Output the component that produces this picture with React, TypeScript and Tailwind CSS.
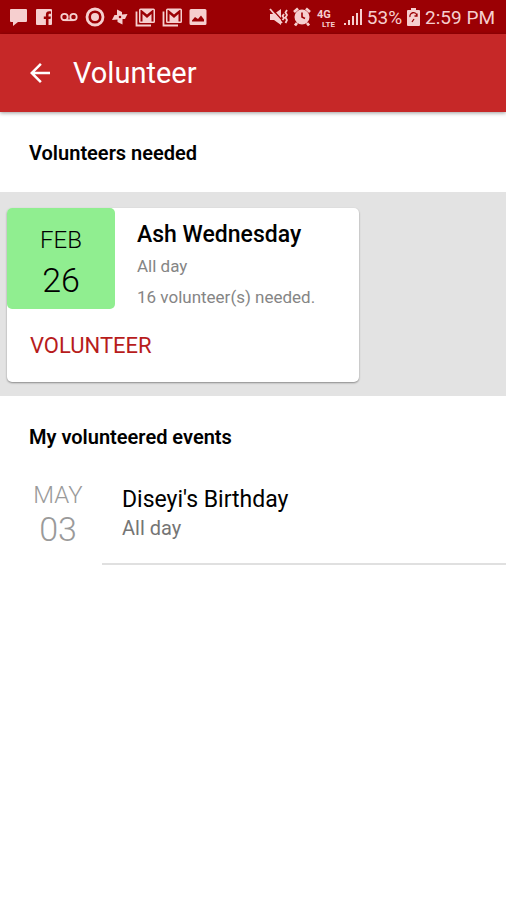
import type { ReactNode } from "react";
import { MdArrowBack } from "react-icons/md";

interface IconProps {
    width: number;
    height?: number;
    children: ReactNode;
}

function Icon({ width, height = 20, children }: IconProps) {
    return (
        <svg
            width={width}
            height={height}
            viewBox={`0 0 ${width} ${height}`}
            fill="currentColor"
            aria-hidden="true"
            className="shrink-0"
        >
            {children}
        </svg>
    );
}

function MailStackIcon() {
    return (
        <Icon width={20}>
            <path d="M1.500 4.500v14H16" fill="none" stroke="currentColor" strokeWidth="1.800" />
            <path
                fillRule="evenodd"
                d="M5.500 1.500h13A1.500 1.500 0 0 1 20 3v11.500a1.500 1.500 0 0 1-1.500 1.500h-13A1.500 1.500 0 0 1 4 14.500V3a1.500 1.500 0 0 1 1.500-1.500zM5.500 3v11.500h2V7l4.500 4 4.500-4v7.500h2V3h-1L12 7.500 6.500 3z"
            />
        </Icon>
    );
}

function StatusBar() {
    return (
        <div className="flex h-[34px] items-center justify-between bg-[#9b0004] pr-[11px] pl-[9px] text-[#f6cfcf]">
            <div className="flex items-center gap-[7px]">
                <Icon width={19}>
                    <path d="M2 2h15a1 1 0 0 1 1 1v11a1 1 0 0 1-1 1H9l-5 4v-4H2a1 1 0 0 1-1-1V3a1 1 0 0 1 1-1z" />
                </Icon>
                <Icon width={18}>
                    <path d="M2 2h14a1 1 0 0 1 1 1v14a1 1 0 0 1-1 1h-2.500v-6h2l.4-2.500h-2.400V8c0-.8.3-1.300 1.300-1.300h1.200V4.400c-.5-.1-1.100-.1-1.800-.1-2 0-3.300 1.200-3.300 3.300v1.900H8.800V12h2.100v6H2a1 1 0 0 1-1-1V3a1 1 0 0 1 1-1z" />
                </Icon>
                <Icon width={18}>
                    <g fill="none" stroke="currentColor" strokeWidth="1.800">
                        <circle cx="4.500" cy="10" r="3.200" />
                        <circle cx="13.500" cy="10" r="3.200" />
                        <path d="M4.500 13.200h9" />
                    </g>
                </Icon>
                <Icon width={20}>
                    <circle cx="10" cy="10" r="8" fill="none" stroke="currentColor" strokeWidth="2.800" />
                    <circle cx="10" cy="10" r="4" />
                </Icon>
                <Icon width={16}>
                    <path
                        fillRule="evenodd"
                        d="M5 2.500l5 2.500v2.500l5.500-.5-2.500 5h-2.500v5.500L5.500 15v-2.500l-5.500.5 2.500-5H5zM8 8.700a1.300 1.300 0 1 0 0 2.600 1.300 1.300 0 0 0 0-2.600z"
                    />
                </Icon>
                <MailStackIcon />
                <MailStackIcon />
                <Icon width={18}>
                    <path
                        fillRule="evenodd"
                        d="M2 2h14a1.500 1.500 0 0 1 1.500 1.500v13A1.500 1.500 0 0 1 16 18H2a1.500 1.500 0 0 1-1.500-1.500v-13A1.500 1.500 0 0 1 2 2zM3 14.500h12v-2l-3-4-3 3.500-3-2-3 3.500z"
                    />
                </Icon>
            </div>
            <div className="flex items-center gap-[5px]">
                <Icon width={19}>
                    <path d="M1 7h4l7-5v16l-7-5H1z" />
                    <path d="M3 2l10 11" stroke="#9b0004" strokeWidth="1.200" />
                    <path d="M1 2l12 14" stroke="currentColor" strokeWidth="1.800" />
                    <path
                        d="M15 7l-1.500 2 1.500 2-1.500 2M18 3l-1.500 2.500L18 8l-1.500 2.500L18 13l-1.500 3"
                        fill="none"
                        stroke="currentColor"
                        strokeWidth="1.800"
                    />
                </Icon>
                <Icon width={18}>
                    <path d="M1 5l4-3.500M17 5l-4-3.500M4 16l-2 2.500M14 16l2 2.500" stroke="currentColor" strokeWidth="2.800" />
                    <circle cx="9" cy="10" r="7.500" />
                    <path d="M9 5.500V10l3 1.500" fill="none" stroke="#9b0004" strokeWidth="1.600" />
                </Icon>
                <Icon width={22} height={24}>
                    <text x="1" y="13" fontSize="11" fontWeight="700" fontFamily="Roboto, sans-serif">4G</text>
                    <text x="6" y="22" fontSize="8" fontWeight="700" fontFamily="Roboto, sans-serif">LTE</text>
                </Icon>
                <Icon width={19}>
                    <path d="M1 16h2v2H1zM5 13h2v5H5zM9 9h2v9H9zM13 6h2v12h-2zM17 2h2v16h-2z" />
                </Icon>
                <span className="text-[19px] leading-none">53%</span>
                <Icon width={13}>
                    <path d="M4 1h5v2h3a1 1 0 0 1 1 1v14a1 1 0 0 1-1 1H1a1 1 0 0 1-1-1V4a1 1 0 0 1 1-1h3z" />
                    <path
                        d="M3 10a3.500 3.500 0 0 1 7-1.500M10 6.500v2.500H7.500M7 12l-2 3"
                        fill="none"
                        stroke="#9b0004"
                        strokeWidth="1.300"
                    />
                </Icon>
                <span className="text-[19px] leading-none">2:59 PM</span>
            </div>
        </div>
    );
}

interface DateLabelProps {
    month: string;
    day: string;
    roomy?: boolean;
}

function DateLabel({ month, day, roomy }: DateLabelProps) {
    return (
        <div className="text-center font-light">
            <div className="text-[24px] leading-8">{month}</div>
            <div className={roomy ? "text-[34px] leading-[48px]" : "text-[34px] leading-9"}>{day}</div>
        </div>
    );
}

export default function App() {
    return (
        <div className="min-h-screen bg-white font-[Roboto,sans-serif] text-black">
            <StatusBar />
            <header className="flex h-[78px] items-center gap-[18px] bg-[#c62828] px-[25px] text-white shadow-[0_1px_4px_rgba(0,0,0,0.4)]">
                <button type="button" aria-label="Back">
                    <MdArrowBack size={30} />
                </button>
                <h1 className="text-[29px] leading-8">Volunteer</h1>
            </header>

            <main>
                <h2 className="px-[29px] pt-[29px] pb-[27px] text-[20px] leading-6 font-semibold">Volunteers needed</h2>
                <section className="bg-[#e3e3e3] px-[7px] pt-4 pb-[14px]">
                    <article className="w-[352px] max-w-full rounded-[5px] bg-white pb-5 shadow-[0_1px_2px_rgba(0,0,0,0.4)]">
                        <div className="flex items-start">
                            <div className="w-[108px] rounded-[5px] bg-[#90ee90] pt-4 pb-[5px]">
                                <DateLabel month="FEB" day="26" roomy />
                            </div>
                            <div className="pt-[11px] pl-[22px]">
                                <h3 className="text-[23px] leading-8 font-medium">Ash Wednesday</h3>
                                <p className="text-[17px] leading-[31px] text-[#858585]">All day</p>
                                <p className="text-[17px] leading-[31px] text-[#858585]">16 volunteer(s) needed.</p>
                            </div>
                        </div>
                        <button type="button" className="mt-[17px] ml-[23px] block text-[22px] leading-8 text-[#b71c1c]">
                            VOLUNTEER
                        </button>
                    </article>
                </section>

                <h2 className="px-[29px] pt-[29px] pb-[27px] text-[20px] leading-6 font-semibold">My volunteered events</h2>
                <section className="flex">
                    <div className="w-[102px] pt-[3px] pr-[14px] pl-7 text-[#9a9a9a]">
                        <DateLabel month="MAY" day="03" />
                    </div>
                    <div className="grow border-b-2 border-[#e0e0e0] pt-[10px] pb-[21px] pl-5">
                        <h3 className="text-[23px] leading-7">Diseyi's Birthday</h3>
                        <p className="text-[20px] leading-7 text-[#757575]">All day</p>
                    </div>
                </section>
            </main>
        </div>
    );
}
